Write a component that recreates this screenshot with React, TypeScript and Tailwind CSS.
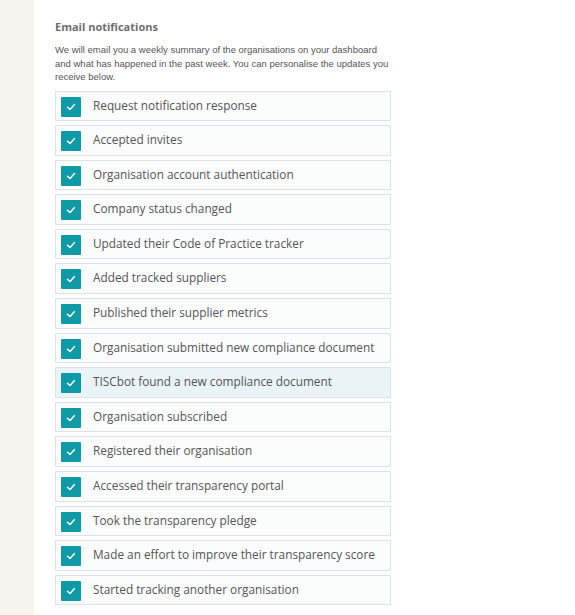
const options = [
  "Request notification response",
  "Accepted invites",
  "Organisation account authentication",
  "Company status changed",
  "Updated their Code of Practice tracker",
  "Added tracked suppliers",
  "Published their supplier metrics",
  "Organisation submitted new compliance document",
  "TISCbot found a new compliance document",
  "Organisation subscribed",
  "Registered their organisation",
  "Accessed their transparency portal",
  "Took the transparency pledge",
  "Made an effort to improve their transparency score",
  "Started tracking another organisation",
];

function CheckBox() {
  return (
    <span className="flex h-5 w-5 shrink-0 items-center justify-center rounded-[1px] bg-[#0e9aa7]">
      <svg width="10" height="8" viewBox="0 0 10 8" fill="none">
        <polyline points="1.5,4.2 4,6.5 8.5,1.5" stroke="#fff" strokeWidth="1.4" strokeLinecap="round" strokeLinejoin="round" />
      </svg>
    </span>
  );
}

export default function App() {
  return (
    <div className="flex min-h-[615px] bg-white">
      <div className="w-[34px] shrink-0 bg-[#f5f4ef]" />
      <div className="pl-[21px] pt-[20px] w-[357px]">
        <h2 className="font-['Open_Sans',sans-serif] text-[11px] font-bold leading-[14px] text-[#6e6e6e]">
          Email notifications
        </h2>
        <p className="mt-[9px] w-[345px] font-['Liberation_Sans',Arial,sans-serif] text-[9.5px] leading-[13.5px] text-[#555]">
          We will email you a weekly summary of the organisations on your dashboard
          <br />
          and what has happened in the past week. You can personalise the updates you
          <br />
          receive below.
        </p>
        <div className="mt-[7px] flex flex-col gap-[4px]">
          {options.map((label) => (
            <label
              key={label}
              className={`flex h-[30.6px] items-start border border-[#dde3e4] pl-[5px] pt-[5px] ${
                label.startsWith("TISCbot") ? "bg-[#eaf4f7]" : "bg-[#fbfcfc]"
              }`}
            >
              <CheckBox />
              <span className="ml-[12px] font-['Open_Sans',sans-serif] text-[11.8px] leading-[16px] text-[#555]">
                {label}
              </span>
            </label>
          ))}
        </div>
      </div>
    </div>
  );
}
